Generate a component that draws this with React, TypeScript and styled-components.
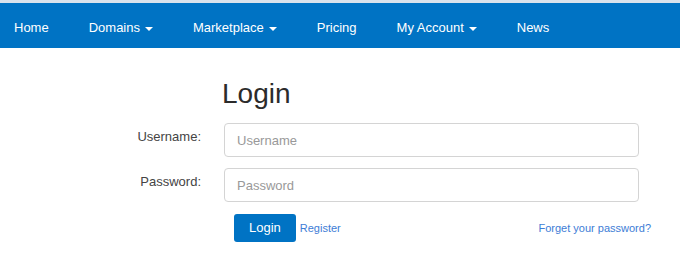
import React from 'react';
import styled, { createGlobalStyle } from 'styled-components';

const GlobalStyle = createGlobalStyle`
  html, body {
    margin: 0;
    padding: 0;
    background: #ffffff;
    font-family: 'Liberation Sans', Arial, sans-serif;
    color: #333333;
  }
`;

const navItems = [
  { label: 'Home' },
  { label: 'Domains', dropdown: true },
  { label: 'Marketplace', dropdown: true },
  { label: 'Pricing' },
  { label: 'My Account', dropdown: true },
  { label: 'News' },
];

export default function App() {
  return (
    <>
      <GlobalStyle />
      <NavBar>
        {navItems.map((item) => (
          <NavItem key={item.label} href="#">
            {item.label}
            {item.dropdown && <Caret />}
          </NavItem>
        ))}
      </NavBar>
      <FormGrid>
        <Heading>Login</Heading>
        <Label htmlFor="username">Username:</Label>
        <Input id="username" placeholder="Username" />
        <Label htmlFor="password">Password:</Label>
        <Input id="password" type="password" placeholder="Password" />
        <Actions>
          <Button type="button">Login</Button>
          <SmallLink href="#">Register</SmallLink>
          <Spacer />
          <SmallLink href="#">Forget your password?</SmallLink>
        </Actions>
      </FormGrid>
    </>
  );
}

const NavBar = styled.nav`
  display: flex;
  align-items: center;
  gap: 40px;
  height: 45px;
  padding: 0 0 0 14px;
  border-top: 3px solid #d9e3ed;
  background: #0073c4;
`;

const NavItem = styled.a`
  display: inline-flex;
  align-items: center;
  padding-top: 5px;
  font-size: 13px;
  line-height: 20px;
  color: #ffffff;
  text-decoration: none;
`;

const Caret = styled.span`
  display: inline-block;
  width: 0;
  height: 0;
  margin-left: 5px;
  margin-top: 2px;
  border-top: 4px solid #ffffff;
  border-left: 4px solid transparent;
  border-right: 4px solid transparent;
`;

const FormGrid = styled.form`
  display: grid;
  grid-template-columns: 201px 415px;
  column-gap: 23px;
  row-gap: 11px;
  align-items: start;
  margin-top: 30px;
`;

const Heading = styled.h2`
  grid-column: 2;
  margin: 0 0 3px -2px;
  font-size: 28px;
  font-weight: 500;
  line-height: 31px;
  color: #2b2b2b;
`;

const Label = styled.label`
  grid-column: 1;
  padding-top: 4px;
  text-align: right;
  font-size: 13px;
  line-height: 20px;
  color: #444444;
`;

const Input = styled.input`
  grid-column: 2;
  box-sizing: border-box;
  width: 100%;
  height: 34px;
  padding: 0 12px;
  border: 1px solid #d4d4d4;
  border-radius: 4px;
  font-family: 'Liberation Sans', Arial, sans-serif;
  font-size: 13px;
  color: #555555;
  outline: none;

  &::placeholder {
    color: #999999;
  }
`;

const Actions = styled.div`
  grid-column: 2;
  display: flex;
  align-items: center;
  gap: 4px;
  margin: 1px -12px 0 10px;
`;

const Button = styled.button`
  height: 28px;
  padding: 0 15px;
  border: none;
  border-radius: 3px;
  background: #0073c4;
  color: #ffffff;
  font-family: 'Liberation Sans', Arial, sans-serif;
  font-size: 13px;
  line-height: 28px;
  cursor: pointer;
`;

const SmallLink = styled.a`
  font-size: 11px;
  line-height: 14px;
  color: #3d7dd6;
  text-decoration: none;
`;

const Spacer = styled.span`
  flex: 1;
`;
